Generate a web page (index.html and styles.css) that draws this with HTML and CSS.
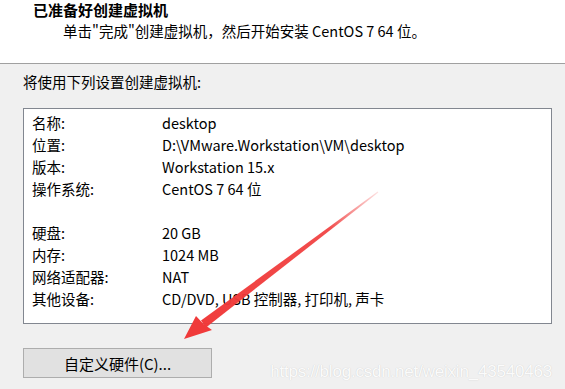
FILE: index.html
```html
<!DOCTYPE html>
<html lang="zh-CN">
<head>
    <meta charset="UTF-8">
    <title>新建虚拟机向导</title>
    <link rel="stylesheet" href="styles.css">
</head>
<body>
    <div class="header">
        <h1>已准备好创建虚拟机</h1>
        <p class="subtitle">单击"完成"创建虚拟机，然后开始安装 CentOS 7 64 位。</p>
    </div>

    <div class="content">
        <p class="intro">将使用下列设置创建虚拟机:</p>

        <div class="summary">
            <span class="key">名称:</span><span>desktop</span>
            <span class="key">位置:</span><span>D:\VMware.Workstation\VM\desktop</span>
            <span class="key">版本:</span><span>Workstation 15.x</span>
            <span class="key">操作系统:</span><span>CentOS 7 64 位</span>
            <span class="key"></span><span></span>
            <span class="key">硬盘:</span><span>20 GB</span>
            <span class="key">内存:</span><span>1024 MB</span>
            <span class="key">网络适配器:</span><span>NAT</span>
            <span class="key">其他设备:</span><span>CD/DVD, USB 控制器, 打印机, 声卡</span>
        </div>

        <div class="footer">
            <button class="custom-btn">自定义硬件(C)...</button>
            <span class="watermark">https://blog.csdn.net/weixin_43540463</span>
        </div>
    </div>

    <!-- annotation arrow drawn over the dialog -->
    <svg class="arrow" width="565" height="389" viewBox="0 0 565 389">
        <defs>
            <linearGradient id="fade" x1="378" y1="192" x2="184" y2="339" gradientUnits="userSpaceOnUse">
                <stop offset="0" stop-color="#f03a3a" stop-opacity="0.15"/>
                <stop offset="0.25" stop-color="#f03a3a" stop-opacity="0.9"/>
                <stop offset="1" stop-color="#f03a3a"/>
            </linearGradient>
        </defs>
        <polygon fill="url(#fade)" points="378.3,192.4 377.7,191.6 201,320.5 206,327.5"/>
        <polygon fill="#f03a3a" points="184,339 196,316 203.5,324 212,330"/>
    </svg>
</body>
</html>
```

FILE: styles.css
```css
body {
    margin: 0;
    width: 565px;
    height: 389px;
    overflow: hidden;
    background-color: #f0f0f0;
    font-family: "Noto Sans CJK SC", "Noto Sans", sans-serif;
    font-size: 14.5px;
    color: #000;
    position: relative;
}

.header {
    background-color: #fff;
    height: 64px;
    border-bottom: 1px solid #a0a0a0;
    box-sizing: border-box;
}

h1 {
    margin: 0;
    padding-left: 33px;
    font-size: 15px;
    font-weight: bold;
    line-height: 19px;
}

.subtitle {
    margin: 2px 0 0;
    padding-left: 63px;
    line-height: 20px;
}

.content {
    padding: 0 13px 0 23px;
}

.intro {
    margin: 0;
    padding-top: 8px;
    line-height: 20px;
}

.summary {
    margin-top: 16px;
    height: 216px;
    box-sizing: border-box;
    background-color: #fff;
    border: 1px solid #828790;
    padding: 2px 8px 0;
    display: grid;
    grid-template-columns: 130px 1fr;
    grid-auto-rows: 22px;
    align-items: center;
}

.footer {
    display: flex;
    align-items: center;
    justify-content: space-between;
    margin-top: 20px;
}

.custom-btn {
    width: 189px;
    height: 30px;
    background-color: #e1e1e1;
    border: 1px solid #adadad;
    font-family: inherit;
    font-size: 15px;
    padding: 0;
    color: #000;
}

.watermark {
    font-family: "Liberation Sans", Arial, sans-serif;
    font-size: 17px;
    color: #fbfbfb;
    text-shadow: 0 0 1px rgba(0, 0, 0, 0.18);
    margin-top: 18px;
    letter-spacing: -0.2px;
}

.arrow {
    position: absolute;
    left: 0;
    top: 0;
    pointer-events: none;
}
```
